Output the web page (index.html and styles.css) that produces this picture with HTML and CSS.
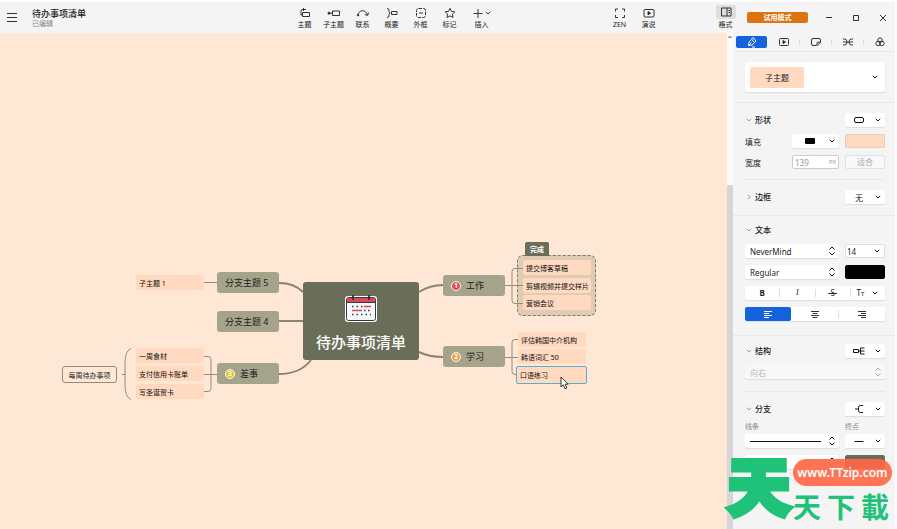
FILE: index.html
```html
<!DOCTYPE html>
<html lang="zh-CN">
<head>
  <meta charset="UTF-8" />
  <meta name="viewport" content="width=device-width, initial-scale=1.0" />
  <title>待办事项清单</title>
  <link rel="stylesheet" href="styles.css">
</head>
<body>
  <!-- shared icons -->
  <svg class="defs" aria-hidden="true">
    <symbol id="down" viewBox="0 0 8 8"><path d="M1.8 2.8 4 5l2.2-2.2" /></symbol>
    <symbol id="right" viewBox="0 0 8 8"><path d="M3 1.8 5.2 4 3 6.2" /></symbol>
    <symbol id="updown" viewBox="0 0 8 12"><path d="M1.5 4.5 4 2l2.5 2.5M1.5 7.5 4 10l2.5-2.5" /></symbol>
  </svg>

  <div class="app">
    <header class="topbar">
      <button class="menu" aria-label="菜单"><svg width="10" height="9" viewBox="0 0 10 9"><path d="M0 .5h10M0 4.5h10M0 8.5h10" /></svg></button>
      <div class="doc">
        <h1>待办事项清单</h1>
        <p>已编辑</p>
      </div>
      <nav class="tools">
        <button><svg width="14" height="12" viewBox="0 0 14 12"><path d="M8 2.5H4.500q-1.500 0-1.500 1.500v4h1.500M4.500 5.500h7v4h-7zM6 1 4.500 2.500 6 4" /></svg>主题</button>
        <button><svg width="14" height="12" viewBox="0 0 14 12"><path d="M5.500 4h7v4.500h-7zM1.500 6.200h4" /><circle cx="2" cy="6.200" r="1" class="dot" /></svg>子主题</button>
        <button><svg width="14" height="12" viewBox="0 0 14 12"><path d="M2 8C3 3 9 1.500 11.500 8M8.800 7.600l2.900.8.900-2.900" /><circle cx="2" cy="8.200" r=".8" class="dot" /></svg>联系</button>
        <button><svg width="14" height="12" viewBox="0 0 14 12"><path d="M2 1.500q2 0 2 1.700v1.500L5 6 4 7.300v1.500q0 1.700-2 1.700M6.500 4.500H12v3H6.500z" /></svg>概要</button>
        <button><svg width="14" height="12" viewBox="0 0 14 12"><rect x="2.500" y="1.500" width="9" height="9" rx="2" stroke-dasharray="3.500 1" /><path d="M5 6h4" /></svg>外框</button>
        <button><svg width="14" height="12" viewBox="0 0 14 12"><path d="m7 1.300 1.500 3.100 3.300.4-2.400 2.300.6 3.400-3-1.600-3 1.600.6-3.400L2.200 4.800l3.300-.4z" /></svg>标记</button>
        <button class="insert"><span><svg width="12" height="12" viewBox="0 0 12 12"><path d="M6 2v9M1.500 6.500h9" /></svg><svg width="8" height="8"><use href="#down" /></svg></span>插入</button>
      </nav>
      <nav class="tools view">
        <button><svg width="14" height="12" viewBox="0 0 14 12"><path d="M5 2H2.500v2.500M9 2h2.500v2.500M5 10.500H2.500V8M9 10.500h2.500V8" /></svg>ZEN</button>
        <button><svg width="14" height="12" viewBox="0 0 14 12"><rect x="2" y="2.500" width="10" height="7.500" rx="1" /><path class="dot" d="m6 4.600 2.600 1.600L6 7.800z" /></svg>演说</button>
      </nav>
      <nav class="tools format">
        <button><svg width="20" height="14" viewBox="0 0 20 14"><path d="M5.500 3h9.500v8H5.500zM11 3v8M12.500 5.500H14M12.500 7.500H14" /></svg>格式</button>
      </nav>
      <button class="trial">试用模式</button>
      <div class="win">
        <button aria-label="最小化"><svg width="8" height="8" viewBox="0 0 8 8"><path d="M1 3.500h6" /></svg></button>
        <button aria-label="最大化"><svg width="8" height="8" viewBox="0 0 8 8"><path d="M1.500 1.500h5v5h-5z" /></svg></button>
        <button aria-label="关闭"><svg width="8" height="8" viewBox="0 0 8 8"><path d="m1 1 6 6M7 1 1 7" /></svg></button>
      </div>
    </header>

    <div class="work">
      <main class="canvas">
        <div class="boundary"></div>
        <svg class="lines" width="620" height="400" viewBox="0 0 620 400">
          <g class="main">
            <path d="M419 259C427 254 433 252 443 252" />
            <path d="M419 319C427 323 433 324 443 324" />
            <path d="M279 250C289 250 297 253 303 259" />
            <path d="M279 288H303" />
            <path d="M279 341C293 341 304 336 311 327" />
          </g>
          <path d="M505 252.500H523M523 235.500H515q-3 0-3 3v29q0 3 3 3H523" />
          <path d="M505 324.500H518M518 306.500H515q-3 0-3 3v29q0 3 3 3H518" />
          <path d="M204 249.500H217M204 341.500H217" />
          <path d="M204 323.500H208q3 0 3 3v29q0 3-3 3H204" />
          <path d="M131 315.500C126 318 125 323 125 333V349C125 359 126 364 131 366.500M122 341.500H125" />
        </svg>

        <div class="node root">
          <svg width="34" height="29" viewBox="0 0 34 29">
            <rect x="1" y="2" width="32" height="26" rx="3" fill="#fff" />
            <rect x="2.500" y="3.500" width="29" height="23" rx="2" fill="#f5f6f9" stroke="#34384d" />
            <path d="M3 4h28v4.500H3z" fill="#dc4b52" />
            <path d="M3 8.500h28" stroke="#34384d" />
            <path d="M9 1v5M25 1v5" stroke="#34384d" stroke-width="2" />
            <path d="M8 12.500h11M24 16.500h3M8 20.500h19" stroke="#34384d" stroke-width="1.500" stroke-dasharray="1.500 3" />
            <path d="M20 12.500h7M8 16.500h10" stroke="#dc4b52" stroke-width="1.500" />
            <path d="M20 16.500h1.500" stroke="#34384d" stroke-width="1.500" />
          </svg>
          待办事项清单
        </div>
        <div class="node branch b5">分支主题 5</div>
        <div class="node branch b4">分支主题 4</div>
        <div class="node branch errand"><b class="num yellow">3</b>差事</div>
        <div class="node branch job"><b class="num red">1</b>工作</div>
        <div class="node branch study"><b class="num orange">2</b>学习</div>

        <div class="node leaf c1">子主题 1</div>
        <div class="node leaf food">一周食材</div>
        <div class="node leaf card">支付信用卡账单</div>
        <div class="node leaf xmas">写圣诞贺卡</div>
        <div class="node weekly">每周待办事项</div>

        <div class="node tab">完成</div>
        <div class="node leaf blog">提交博客草稿</div>
        <div class="node leaf video">剪辑视频并提交样片</div>
        <div class="node leaf meet">营销会议</div>
        <div class="node leaf agent">评估韩国中介机构</div>
        <div class="node leaf words">韩语词汇 50</div>
        <div class="node leaf speak">口语练习</div>

        <svg class="cursor" width="9" height="14" viewBox="0 0 9 14"><path d="M1 1v10l2.300-2.200L5 12.800l1.800-.8-1.700-3.800h3z" /></svg>
      </main>

      <div class="scroll">
        <svg width="6" height="8" viewBox="0 0 6 8"><path d="m1.500 5 1.500-1.500L4.500 5" /></svg>
        <div class="thumb"></div>
      </div>

      <aside class="panel">
        <nav class="tabs">
          <button class="on" aria-label="样式"><svg width="12" height="12" viewBox="0 0 12 12"><path d="M7 1.500 10 5 8.500 6.500 5.500 3zM5.500 3.500 3 6l-.5 3.500L6 9l2.500-2.500M2.500 9.500 5.500 6.500M6 11h3" /></svg></button>
          <button aria-label="演说"><svg width="12" height="12" viewBox="0 0 12 12"><rect x="1.500" y="2.500" width="9" height="7" rx="1" /><path class="dot" d="M5 4.500 7.500 6 5 7.500z" /></svg></button>
          <button aria-label="画布"><svg width="12" height="12" viewBox="0 0 12 12"><path d="M6.500 9.500H3q-1.500 0-1.500-1.500V4Q1.500 2.500 3 2.500h6q1.500 0 1.500 1.500v2.500l-3.500 3V7q0-.8.8-.8h2.700" /></svg></button>
          <button aria-label="骨架"><svg width="12" height="12" viewBox="0 0 12 12"><path d="M1 3h1.500Q5 3 5 6T2.500 9H1M11 3H9.500Q7 3 7 6t2.500 3H11M1 6h10" /></svg></button>
          <button aria-label="配色"><svg width="12" height="12" viewBox="0 0 12 12"><circle cx="6" cy="4.200" r="2.300" /><circle cx="4.200" cy="7.400" r="2.300" /><circle cx="7.800" cy="7.400" r="2.300" /></svg></button>
        </nav>

        <div class="style-pick">
          <button><span>子主题</span><svg class="arrow" width="8" height="8"><use href="#down" /></svg></button>
        </div>

        <section class="shape">
          <div class="row">
            <h2><svg width="8" height="8"><use href="#down" /></svg>形状</h2>
            <div class="pick small">
              <svg class="glyph" width="12" height="8" viewBox="0 0 12 8"><rect x="1.500" y="1.500" width="9" height="5" rx="1.500" /></svg>
              <select aria-label="形状"><option></option></select>
              <svg class="arrow" width="8" height="8"><use href="#down" /></svg>
            </div>
          </div>
          <div class="row">
            <label for="fill">填充</label>
            <div class="pick mid">
              <svg class="glyph" width="12" height="8" viewBox="0 0 12 8"><rect x="1" y="1" width="10" height="6" rx="1" fill="#000" stroke="none" /></svg>
              <select id="fill"><option></option></select>
              <svg class="arrow" width="8" height="8"><use href="#down" /></svg>
            </div>
            <button class="swatch peach" aria-label="填充颜色"></button>
          </div>
          <div class="row">
            <label for="width">宽度</label>
            <div class="width-box"><input type="text" id="width" value="139"><span>PX</span></div>
            <button class="fit" disabled>适合</button>
          </div>
        </section>

        <section class="border">
          <div class="row">
            <h2><svg width="8" height="8"><use href="#right" /></svg>边框</h2>
            <div class="pick small none">
              <select aria-label="边框"><option>无</option></select>
              <svg class="arrow" width="8" height="8"><use href="#down" /></svg>
            </div>
          </div>
        </section>

        <section class="text">
          <div class="row">
            <h2><svg width="8" height="8"><use href="#down" /></svg>文本</h2>
          </div>
          <div class="row">
            <div class="pick large">
              <select aria-label="字体"><option>NeverMind</option></select>
              <svg class="arrow" width="8" height="12"><use href="#updown" /></svg>
            </div>
            <div class="pick small size">
              <select aria-label="字号"><option>14</option></select>
              <svg class="arrow" width="8" height="8"><use href="#down" /></svg>
            </div>
          </div>
          <div class="row">
            <div class="pick large">
              <select aria-label="字重"><option>Regular</option></select>
              <svg class="arrow" width="8" height="12"><use href="#updown" /></svg>
            </div>
            <button class="swatch black" aria-label="文字颜色"></button>
          </div>
          <div class="group">
            <button><b>B</b></button>
            <button><i>I</i></button>
            <button><s>&nbsp;S&nbsp;</s></button>
            <button class="case">T<small>T</small><svg class="arrow" width="8" height="8"><use href="#down" /></svg></button>
          </div>
          <div class="group align">
            <button class="on" aria-label="左对齐"><svg width="10" height="8" viewBox="0 0 10 8"><path d="M1 1.500h8M1 3.500h5M1 5.500h8M1 7.500h5" /></svg></button>
            <button aria-label="居中"><svg width="10" height="8" viewBox="0 0 10 8"><path d="M1 1.500h8M2.500 3.500h5M1 5.500h8M2.500 7.500h5" /></svg></button>
            <button aria-label="右对齐"><svg width="10" height="8" viewBox="0 0 10 8"><path d="M1 1.500h8M4 3.500h5M1 5.500h8M4 7.500h5" /></svg></button>
          </div>
        </section>

        <section class="structure">
          <div class="row">
            <h2><svg width="8" height="8"><use href="#down" /></svg>结构</h2>
            <div class="pick small">
              <svg class="glyph" width="12" height="8" viewBox="0 0 12 8"><path d="M.5 2.500h5v3h-5zM5.500 4H11.500M11.500 1H7.500v6h4" /></svg>
              <select aria-label="结构"><option></option></select>
              <svg class="arrow" width="8" height="8"><use href="#down" /></svg>
            </div>
          </div>
          <div class="row">
            <div class="pick full off">
              <select aria-label="方向" disabled><option>向右</option></select>
              <svg class="arrow" width="8" height="12"><use href="#updown" /></svg>
            </div>
          </div>
        </section>

        <section class="branches">
          <div class="row">
            <h2><svg width="8" height="8"><use href="#down" /></svg>分支</h2>
            <div class="pick small">
              <svg class="glyph" width="12" height="8" viewBox="0 0 12 8"><path d="M2 4h3.500M10 .5H7.500q-2 0-2 2v3q0 2 2 2H10" /></svg>
              <select aria-label="分支"><option></option></select>
              <svg class="arrow" width="8" height="8"><use href="#down" /></svg>
            </div>
          </div>
          <div class="row">
            <div class="field">
              <label for="line">线条</label>
              <div class="pick large">
                <svg class="glyph long" width="71" height="8" viewBox="0 0 71 8"><path d="M0 4.500h71" /></svg>
                <select id="line"><option></option></select>
                <svg class="arrow" width="8" height="12"><use href="#updown" /></svg>
              </div>
            </div>
            <div class="field">
              <label for="end">终点</label>
              <div class="pick small">
                <svg class="glyph" width="12" height="8" viewBox="0 0 12 8"><path d="M1.500 4.500h9" /></svg>
                <select id="end"><option></option></select>
                <svg class="arrow" width="8" height="8"><use href="#down" /></svg>
              </div>
            </div>
          </div>
          <div class="row">
            <div class="pick large">
              <select aria-label="粗细"><option>细</option></select>
              <svg class="arrow" width="8" height="12"><use href="#updown" /></svg>
            </div>
            <button class="swatch olive" aria-label="分支颜色"></button>
          </div>
        </section>
      </aside>
    </div>
  </div>

  <div class="watermark">
    <span class="big">天</span>
    <div class="side">
      <a href="#">www.TTzip.com</a>
      <p><span>天</span><span>下</span><span>載</span></p>
    </div>
  </div>
</body>
</html>
```

FILE: styles.css
```css
* {
  box-sizing: border-box;
}
body {
  margin: 0;
  background-color: #fff;
  color: #222;
  font-family: "Noto Sans", "Noto Sans CJK SC", sans-serif;
  font-size: 8px;
}
h1, h2, p {
  margin: 0;
}
button, select, input {
  margin: 0;
  padding: 0;
  border: none;
  background: none;
  color: inherit;
  font: inherit;
}
svg {
  display: block;
  flex: none;
  fill: none;
  stroke: #333;
}
.dot {
  fill: #222;
}
.defs {
  position: absolute;
  width: 0;
  height: 0;
}
.app {
  display: flex;
  flex-direction: column;
  min-height: 100vh;
  padding: 2px 2px 0 0;
}

/* top bar */
.topbar {
  display: flex;
  align-items: center;
  height: 31px;
  background-color: #f4f4f4;
}
.menu {
  width: 32px;
  padding-left: 7px;
}
.doc {
  width: 258px;
}
.doc h1 {
  font-size: 9px;
  font-weight: 500;
  line-height: 11px;
}
.doc p {
  color: #888;
  font-size: 7px;
  line-height: 9px;
}
.tools {
  display: flex;
}
.tools button {
  display: flex;
  flex-direction: column;
  align-items: center;
  justify-content: flex-end;
  width: 29px;
  height: 26px;
  font-size: 7px;
  line-height: 12px;
}
.tools .insert {
  width: 35px;
}
.insert span {
  display: flex;
  align-items: center;
}
.view {
  margin-left: auto;
  margin-right: 48px;
}
.format svg {
  border-radius: 2px;
  background-color: #dedede;
}
.trial {
  width: 61px;
  height: 11px;
  margin: 0 17px 0 7px;
  border-radius: 2px;
  background-color: #dc7413;
  color: #fff;
  font-size: 7px;
  font-weight: bold;
  line-height: 11px;
}
.win {
  display: flex;
  gap: 19px;
  padding-right: 8px;
}

/* mind map */
.work {
  display: flex;
  flex: 1;
}
.canvas {
  position: relative;
  flex: 1;
  background-color: #ffe7d6;
}
.lines {
  position: absolute;
  top: 0;
  left: 0;
}
.lines path {
  stroke: #968b78;
}
.main path {
  stroke: #8c836f;
  stroke-width: 2;
}
.node {
  position: absolute;
  display: flex;
  align-items: center;
  white-space: nowrap;
}
.root {
  top: 249px;
  left: 303px;
  flex-direction: column;
  justify-content: center;
  gap: 9px;
  width: 116px;
  height: 78px;
  padding-top: 4px;
  border-radius: 3px;
  background-color: #6a6d58;
  color: #fff;
  font-size: 15px;
  font-weight: 500;
  line-height: 20px;
}
.root svg {
  stroke: none;
}
.branch {
  width: 62px;
  height: 21px;
  padding-left: 8px;
  border-radius: 3px;
  background-color: #a5a48a;
  font-size: 9px;
}
.b5 { top: 239px; left: 217px; }
.b4 { top: 278px; left: 217px; }
.errand { top: 330px; left: 217px; }
.job { top: 242px; left: 443px; }
.study { top: 313px; left: 443px; }
.num {
  display: block;
  width: 10px;
  height: 10px;
  margin-right: 5px;
  border: 1px solid #fff;
  border-radius: 50%;
  color: #fff;
  font-size: 7px;
  line-height: 8px;
  text-align: center;
}
.red { background-color: #e04a50; }
.orange { background-color: #eea04e; }
.yellow { background-color: #e3c52c; }
.leaf {
  width: 68px;
  height: 15px;
  padding-left: 3px;
  border-radius: 2px;
  background-color: #ffd9c0;
  color: #111;
  font-size: 7px;
}
.c1 { top: 242px; left: 136px; }
.food { top: 315px; left: 136px; }
.card { top: 333px; left: 136px; }
.xmas { top: 351px; left: 136px; }
.blog { top: 227px; left: 523px; }
.video { top: 245px; left: 523px; }
.meet { top: 262px; left: 523px; }
.agent { top: 299px; left: 518px; }
.words { top: 316px; left: 518px; }
.speak {
  top: 333px;
  left: 516px;
  width: 71px;
  height: 18px;
  border: 1px solid #58aed0;
}
.weekly {
  top: 333px;
  left: 62px;
  justify-content: center;
  width: 55px;
  height: 17px;
  border: 1px solid #968b78;
  border-radius: 3px;
  font-size: 7px;
}
.boundary {
  position: absolute;
  top: 222px;
  left: 517px;
  width: 79px;
  height: 61px;
  border: 1px dashed #7d7a68;
  border-radius: 6px;
  background-color: #e0ccb4;
}
.tab {
  top: 209px;
  left: 525px;
  justify-content: center;
  width: 24px;
  height: 14px;
  border-radius: 2px 2px 0 0;
  background-color: #6a6d58;
  color: #fff;
  font-size: 7px;
  font-weight: bold;
}
.cursor {
  position: absolute;
  top: 343px;
  left: 560px;
  fill: #fff;
}

.scroll {
  display: flex;
  flex-direction: column;
  width: 6px;
  background-color: #fafafa;
}
.scroll .thumb {
  flex: 1;
  margin-top: 144px;
  background-color: #d6d6d6;
}

/* format panel */
.panel {
  width: 162px;
  background-color: #f4f4f4;
}
.tabs {
  display: flex;
  align-items: center;
  height: 19px;
  padding-left: 3px;
  border-bottom: 1px solid #eaeaea;
}
.tabs button {
  display: flex;
  flex: 1;
  align-items: center;
  justify-content: center;
  height: 6px;
}
.tabs button + button {
  border-left: 1px solid #ddd;
}
.tabs .on {
  height: 12px;
  border-radius: 2px;
  background-color: #1463dc;
}
.tabs .on + button {
  border-color: transparent;
}
.on svg {
  stroke: #fff;
}
.style-pick {
  padding: 10px 10px 10px 12px;
  border-bottom: 1px solid #e8e8e8;
}
.style-pick button {
  display: flex;
  align-items: center;
  justify-content: space-between;
  width: 100%;
  height: 30px;
  padding: 0 6px 0 5px;
  border-radius: 3px;
  background-color: #fff;
  box-shadow: 0 1px 1px #ddd;
}
.style-pick span {
  width: 54px;
  border-radius: 2px;
  background-color: #ffd9c0;
  line-height: 21px;
}
section {
  display: flex;
  flex-direction: column;
  gap: 7px;
  padding: 10px 10px 10px 12px;
  border-bottom: 1px solid #e8e8e8;
}
.shape, .structure {
  margin: 0 10px 0 12px;
  padding-left: 0;
  padding-right: 0;
}
.border {
  padding-bottom: 11px;
}
.text {
  padding-top: 7px;
  padding-bottom: 14px;
}
.structure {
  padding-top: 8px;
  padding-bottom: 12px;
}
.branches {
  border-bottom: none;
}
.row {
  display: flex;
  align-items: center;
  gap: 6px;
  min-height: 14px;
}
.row > h2, .row > label {
  flex: 1;
}
.row h2 {
  display: flex;
  align-items: center;
  gap: 2px;
  font-size: 8px;
  font-weight: 500;
  line-height: 14px;
}
h2 svg {
  stroke: #999;
}
.pick {
  display: grid;
  align-items: center;
  height: 14px;
  border-radius: 2px;
  background-color: #fff;
  box-shadow: 0 1px 1px #ddd;
}
.pick > * {
  grid-area: 1 / 1;
}
.pick select {
  appearance: none;
  width: 100%;
  height: 14px;
  padding-left: 5px;
}
.pick .arrow {
  justify-self: end;
  margin-right: 3px;
  pointer-events: none;
}
.pick .glyph {
  margin-left: 8px;
  stroke: #111;
  pointer-events: none;
}
.arrow {
  stroke: #111;
}
.small, .swatch, .fit {
  width: 40px;
}
.mid, .width-box {
  width: 47px;
}
.mid .glyph {
  margin-left: 12px;
}
.pick .long {
  margin-left: 5px;
}
.large {
  width: 94px;
}
.full {
  width: 100%;
}
.off {
  background-color: #f8f8f8;
  color: #999;
}
.off .arrow {
  stroke: #aaa;
}
.none select {
  padding-left: 10px;
}
.size {
  border: 1px solid #ddd;
  box-shadow: none;
}
.size select {
  height: 12px;
  padding-left: 1px;
}
.swatch {
  height: 14px;
  border: 1px solid #ddd;
  border-radius: 2px;
}
.peach {
  border-color: #e6cdbd;
  background-color: #ffd9c0;
}
.black {
  border-color: #000;
  background-color: #000;
}
.olive {
  border-color: #6a6d58;
  background-color: #6a6d58;
}
.width-box {
  display: flex;
  align-items: center;
  height: 14px;
  padding: 0 2px;
  border: 1px solid #ccc;
  border-radius: 2px;
  background-color: #fff;
  color: #999;
}
.width-box input {
  flex: 1;
  width: 0;
  height: 12px;
}
.width-box span {
  font-size: 6px;
}
.fit {
  height: 14px;
  border: 1px solid #e2e2e2;
  border-radius: 2px;
  background-color: #f8f8f8;
  color: #aaa;
  line-height: 12px;
}
.group {
  display: flex;
  align-items: center;
  height: 14px;
  border-radius: 2px;
  background-color: #fff;
  box-shadow: 0 1px 1px #ddd;
}
.group button {
  display: flex;
  flex: 1;
  align-items: center;
  justify-content: center;
  height: 8px;
  line-height: 8px;
}
.group button + button {
  border-left: 1px solid #ddd;
}
.group i {
  font-family: "Liberation Serif", serif;
}
.case small {
  padding-top: 2px;
  font-size: 6px;
}
.case svg {
  margin-left: 7px;
}
.align .on {
  height: 14px;
  border-radius: 2px;
  background-color: #1463dc;
}
.align .on + button {
  border-color: transparent;
}
.field {
  display: flex;
  flex-direction: column;
  gap: 3px;
}
.field label {
  color: #888;
  font-size: 7px;
  line-height: 8px;
}

/* site mark over the corner */
.watermark {
  position: absolute;
  right: 5px;
  bottom: 10px;
  display: flex;
  align-items: flex-end;
  color: #20c27a;
  font-family: "Noto Sans CJK SC", sans-serif;
  font-weight: bold;
}
.big {
  width: 68px;
  font-size: 61px;
  line-height: 70px;
  text-align: center;
  -webkit-text-stroke: 7px #20c27a;
  stroke-linejoin: round;
}
.side {
  width: 99px;
}
.side a {
  display: block;
  border-radius: 14px;
  background-color: rgba(255, 104, 70, 0.92);
  color: #fff;
  font-family: "Noto Sans", sans-serif;
  font-size: 12px;
  font-weight: 600;
  line-height: 27px;
  text-align: center;
  text-decoration: none;
}
.side p {
  display: flex;
  justify-content: space-between;
  margin-top: 8px;
  padding-right: 3px;
  font-size: 28px;
  line-height: 25px;
}
```
